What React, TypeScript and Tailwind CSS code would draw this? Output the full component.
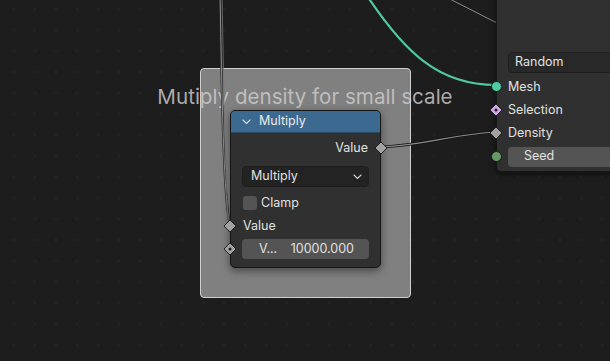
import React from "react";

const Diamond = ({ fill = "#a1a1a1", dot = false, stroke = "#1a1a1a" }: { fill?: string; dot?: boolean; stroke?: string }) => (
  <svg width="14" height="14" viewBox="0 0 14 14">
    <path d="M7 1 L13 7 L7 13 L1 7 Z" fill={fill} stroke={stroke} strokeWidth="0.9" />
    {dot && <circle cx="7" cy="7" r="1.5" fill="#1e1e1e" />}
  </svg>
);

const Chevron = ({ className = "" }: { className?: string }) => (
  <svg width="9" height="6" viewBox="0 0 9 6" className={className}>
    <path d="M1 1 L4.5 4.5 L8 1" fill="none" stroke="currentColor" strokeWidth="1.1" strokeLinecap="round" strokeLinejoin="round" />
  </svg>
);

export default function App() {
  return (
    <div
      className="relative w-[610px] h-[361px] overflow-hidden bg-[#1d1d1d] text-[#e0e0e0]"
      style={{ fontFamily: "Inter, 'DejaVu Sans', sans-serif" }}
    >
      {/* grid */}
      <svg className="absolute inset-0" width="610" height="361">
        <defs>
          <pattern id="g" x="3.5" y="-1.5" width="21" height="21" patternUnits="userSpaceOnUse">
            <rect x="9.5" y="9.5" width="2" height="2" fill="#272727" />
          </pattern>
        </defs>
        <rect width="610" height="361" fill="url(#g)" />
      </svg>

      {/* frame */}
      <div className="absolute left-[200px] top-[68px] w-[211px] h-[230px] rounded-[4px] bg-[#808080] border border-[#cfcfcf]" />
      <div className="absolute left-[140px] top-[84px] w-[330px] text-center text-[20.6px] leading-[26px] text-[rgba(205,205,205,0.82)] whitespace-nowrap">
        Mutiply density for small scale
      </div>

      {/* links */}
      <svg className="absolute inset-0" width="610" height="361">
        <path d="M362 -12 C 405 55, 440 85, 496 85" fill="none" stroke="#4ec9a0" strokeWidth="2.2" />
        <path d="M440 -6 L 497 23" fill="none" stroke="#8a8a8a" strokeWidth="1" />
        <path d="M380 147 C 430 145, 445 135, 496 132" fill="none" stroke="#111" strokeWidth="2.6" />
        <path d="M380 147 C 430 145, 445 135, 496 132" fill="none" stroke="#8c8c8c" strokeWidth="1.2" />
        <path d="M220 -10 C 222 110, 224 200, 230 225" fill="none" stroke="#2a2a2a" strokeWidth="2.4" />
        <path d="M220 -10 C 222 110, 224 200, 230 225" fill="none" stroke="#8e8e8e" strokeWidth="1" />
        <path d="M222 -10 C 224 110, 226 205, 230 248" fill="none" stroke="#777" strokeWidth="0.8" />
      </svg>

      {/* right node */}
      <div className="absolute left-[496px] top-[-20px] w-[130px] h-[192px] rounded-[5px] bg-[#303030] border border-[#161616] shadow-[0_2px_6px_rgba(0,0,0,0.5)]">
        <div className="flex flex-col pt-[71px] text-[12.5px]">
          <div className="ml-[11px] h-[21px] rounded-[4px] bg-[#282828] border border-[#1f1f1f] flex items-center pl-[6px] text-[#e2e2e2]">
            Random
          </div>
          <div className="relative h-[24px] mt-[2px] flex items-center pl-[11px]">
            <span className="absolute left-[-6px] top-[6px] w-[11px] h-[11px] rounded-full bg-[#50cba1] border border-[#1a1a1a]" />
            Mesh
          </div>
          <div className="relative h-[23px] flex items-center pl-[11px]">
            <span className="absolute left-[-8px] top-[4px]">
              <Diamond fill="#cfa7e8" dot stroke="#1a1a1a" />
            </span>
            Selection
          </div>
          <div className="relative h-[23px] flex items-center pl-[11px]">
            <span className="absolute left-[-8px] top-[4px]">
              <Diamond />
            </span>
            Density
          </div>
          <div className="relative h-[23px] flex items-center pl-[11px]">
            <span className="absolute left-[-6px] top-[6px] w-[11px] h-[11px] rounded-full bg-[#659965] border border-[#1a1a1a]" />
            <div className="w-full h-[20px] rounded-[4px] bg-[#545454] flex items-center pl-[16px]">Seed</div>
          </div>
        </div>
      </div>

      {/* multiply node */}
      <div className="absolute left-[230px] top-[110px] w-[151px] h-[158px] rounded-[5px] bg-[#303030] border border-[#161616] shadow-[0_3px_8px_rgba(0,0,0,0.45)] text-[12.5px]">
        <div className="h-[22px] rounded-t-[4px] bg-[#3c6990] flex items-center pl-[11px] gap-[8px] text-[#eaeaea] border-b border-[#2a4a63]">
          <Chevron className="text-[#dcdcdc]" />
          <span>Multiply</span>
        </div>
        <div className="relative h-[26px] mt-[2px] flex items-center justify-end pr-[12px]">
          Value
          <span className="absolute right-[-8px] top-[6px]">
            <Diamond />
          </span>
        </div>
        <div className="mx-[11px] mt-[5px] h-[21px] rounded-[4px] bg-[#232323] border border-[#1e1e1e] flex items-center justify-between pl-[8px] pr-[6px]">
          <span>Multiply</span>
          <Chevron className="text-[#cfcfcf]" />
        </div>
        <div className="mx-[12px] mt-[7px] h-[18px] flex items-center gap-[4px]">
          <span className="w-[14px] h-[14px] rounded-[3px] bg-[#545454]" />
          <span>Clamp</span>
        </div>
        <div className="relative h-[23px] mt-[3px] flex items-center pl-[12px]">
          Value
          <span className="absolute left-[-8px] top-[4px]">
            <Diamond />
          </span>
        </div>
        <div className="relative mx-[11px] mt-[1px] h-[20px] rounded-[4px] bg-[#545454] flex items-center justify-between pl-[17px] pr-[15px]">
          <span>V...</span>
          <span>10000.000</span>
          <span className="absolute left-[-19px] top-[3px]">
            <Diamond dot />
          </span>
        </div>
      </div>
    </div>
  );
}
